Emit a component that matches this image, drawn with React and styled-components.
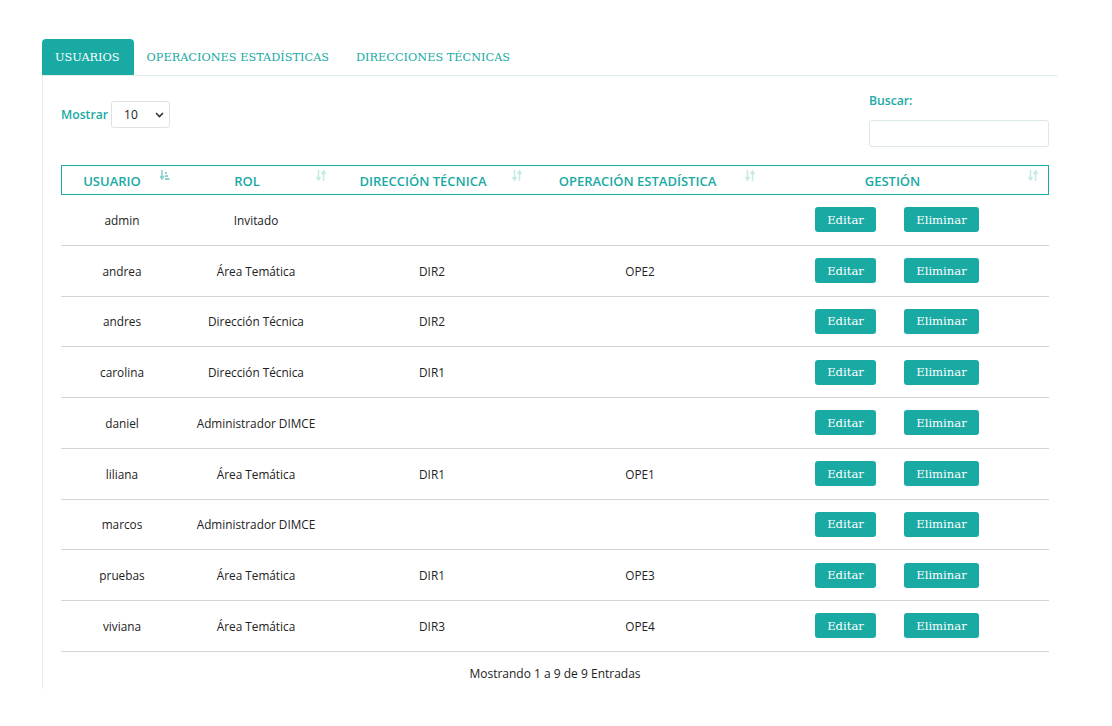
import React from "react";
import styled, { createGlobalStyle } from "styled-components";

const GlobalStyle = createGlobalStyle`
  body {
    margin: 0;
    background: #ffffff;
    font-family: "Open Sans", "Liberation Sans", sans-serif;
    color: #222;
  }
`;

const teal = "#19aaa4";

const Page = styled.div`
  padding: 39px 54px 30px 42px;
`;

const TabBar = styled.div`
  display: flex;
  border-bottom: 1px solid #e3eeee;
`;

const Tab = styled.div`
  height: 36px;
  padding: 0 14px 0 13px;
  display: flex;
  align-items: center;
  font-family: "DejaVu Serif", "Liberation Serif", serif;
  font-size: 11.3px;
  color: ${(p) => (p.$active ? "#fff" : teal)};
  background: ${(p) => (p.$active ? teal : "transparent")};
  border-radius: 4px 4px 0 0;
`;

const Panel = styled.div`
  border-left: 1px solid #e6eeee;
  padding: 16px 9px 7px 18px;
`;

const Controls = styled.div`
  display: flex;
  justify-content: space-between;
  align-items: flex-start;
`;

const ShowBox = styled.div`
  margin-top: 9px;
  display: flex;
  align-items: center;
  gap: 3px;
`;

const Label = styled.span`
  color: ${teal};
  font-size: 12.2px;
  font-weight: 600;
  line-height: 18px;
`;

const Select = styled.div`
  height: 25px;
  border: 1px solid #dde3e3;
  border-radius: 3px;
  display: flex;
  align-items: center;
  justify-content: space-between;
  padding: 0 5px 0 12px;
  width: 40px;
  font-size: 12px;
  color: #222;
`;

const SearchBox = styled.div`
  display: flex;
  flex-direction: column;
  gap: 10px;
  width: 180px;
`;

const Input = styled.div`
  height: 25px;
  border: 1px solid #dde8e8;
  border-radius: 3px;
`;

const HeadRow = styled.div`
  margin-top: 18px;
  display: grid;
  grid-template-columns: 114px 156px 196px 233px 1fr;
  height: 28px;
  border: 1px solid ${teal};
`;

const HeadCell = styled.div`
  display: flex;
  align-items: center;
  position: relative;
  padding: 2px ${(p) => (p.$last ? 28 : 18)}px 0 4px;
`;

const HeadText = styled.span`
  flex: 1;
  text-align: center;
  color: ${teal};
  font-weight: 600;
  font-size: 13px;
  white-space: nowrap;
`;

const SortIcon = styled.svg`
  position: absolute;
  right: ${(p) => (p.$last ? 10 : 6)}px;
  top: 4px;
`;

const Row = styled.div`
  display: grid;
  grid-template-columns: 122px 146px 206px 210px 1fr;
  height: 49.75px;
  border-bottom: 1px solid #d4d4d4;
  align-items: center;
`;

const Cell = styled.div`
  text-align: center;
  font-size: 11.8px;
  color: #222;
`;

const Actions = styled.div`
  display: flex;
  justify-content: center;
  gap: 28px;
`;

const Button = styled.button`
  background: ${teal};
  color: #fff;
  border: none;
  border-radius: 3px;
  height: 25px;
  width: ${(p) => p.$w}px;
  font-family: "DejaVu Serif", "Liberation Serif", serif;
  font-size: 11.6px;
  padding: 0;
`;

const Footer = styled.div`
  text-align: center;
  font-size: 12px;
  padding-top: 14px;
  line-height: 16px;
  color: #222;
`;

const Sort = ({ active, last }) =>
  active ? (
    <SortIcon width="10" height="11" viewBox="0 0 10 11">
      <path d="M2 0v8M0 6l2 3 2-3" stroke="#8fd3cf" strokeWidth="1.6" fill="none" />
      <rect x="5" y="2" width="2" height="2" fill="#8fd3cf" />
      <rect x="5" y="5" width="3" height="2" fill="#8fd3cf" />
      <rect x="5" y="8" width="4.5" height="2" fill="#8fd3cf" />
    </SortIcon>
  ) : (
    <SortIcon $last={last} width="10" height="11" viewBox="0 0 10 11">
      <path d="M2.5 0v9M0.5 7l2 3 2-3" stroke="#c6ebe8" strokeWidth="1.6" fill="none" />
      <path d="M7.5 11V2M5.5 4l2-3 2 3" stroke="#c6ebe8" strokeWidth="1.6" fill="none" />
    </SortIcon>
  );

const users = [
  ["admin", "Invitado", "", ""],
  ["andrea", "Área Temática", "DIR2", "OPE2"],
  ["andres", "Dirección Técnica", "DIR2", ""],
  ["carolina", "Dirección Técnica", "DIR1", ""],
  ["daniel", "Administrador DIMCE", "", ""],
  ["liliana", "Área Temática", "DIR1", "OPE1"],
  ["marcos", "Administrador DIMCE", "", ""],
  ["pruebas", "Área Temática", "DIR1", "OPE3"],
  ["viviana", "Área Temática", "DIR3", "OPE4"],
];

const headers = ["USUARIO", "ROL", "DIRECCIÓN TÉCNICA", "OPERACIÓN ESTADÍSTICA", "GESTIÓN"];

export default function App() {
  return (
    <>
      <GlobalStyle />
      <Page>
        <TabBar>
          <Tab $active>USUARIOS</Tab>
          <Tab>OPERACIONES ESTADÍSTICAS</Tab>
          <Tab>DIRECCIONES TÉCNICAS</Tab>
        </TabBar>
        <Panel>
          <Controls>
            <ShowBox>
              <Label>Mostrar</Label>
              <Select>
                <span>10</span>
                <svg width="9" height="6" viewBox="0 0 9 6">
                  <path d="M1 1l3.5 3.5L8 1" stroke="#333" strokeWidth="1.6" fill="none" />
                </svg>
              </Select>
            </ShowBox>
            <SearchBox>
              <Label>Buscar:</Label>
              <Input />
            </SearchBox>
          </Controls>
          <HeadRow>
            {headers.map((h, i) => (
              <HeadCell key={h} $last={i === 4}>
                <HeadText>{h}</HeadText>
                <Sort active={i === 0} last={i === 4} />
              </HeadCell>
            ))}
          </HeadRow>
          {users.map((u) => (
            <Row key={u[0]}>
              <Cell>{u[0]}</Cell>
              <Cell>{u[1]}</Cell>
              <Cell>{u[2]}</Cell>
              <Cell>{u[3]}</Cell>
              <Actions>
                <Button $w={61}>Editar</Button>
                <Button $w={75}>Eliminar</Button>
              </Actions>
            </Row>
          ))}
          <Footer>Mostrando 1 a 9 de 9 Entradas</Footer>
        </Panel>
      </Page>
    </>
  );
}
